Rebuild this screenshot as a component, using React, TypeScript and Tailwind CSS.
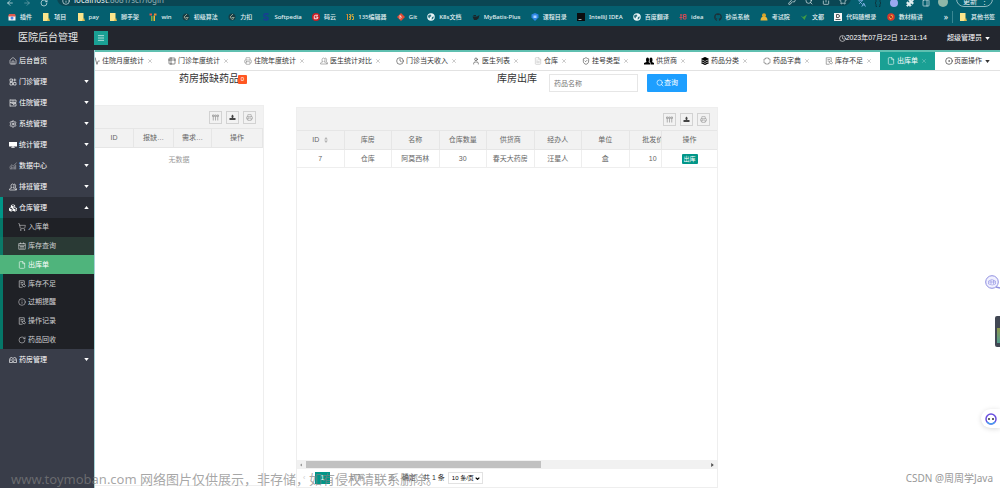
import type { ReactNode } from "react";
import {
  Activity,
  ArrowLeft,
  ArrowRight,
  ChartNoAxesCombined,
  CircleDot,
  Clock,
  File,
  FileText,
  House,
  Info,
  KeyRound,
  Languages,
  Menu,
  PanelRight,
  Puzzle,
  Printer,
  RotateCw,
  Search,
  Settings,
  Share,
  ShieldCheck,
  ShoppingCart,
  Star,
  Table2,
  User,
  X,
} from "lucide-react";
import { FaCubes, FaGithub, FaLayerGroup } from "react-icons/fa";

const icon = "size-2 shrink-0";
const thin = "size-2 shrink-0 stroke-[1.7]";

type Item = { label: string; icon: ReactNode };

function Caret({ up }: { up?: boolean }) {
  return (
    <svg viewBox="0 0 6 4" className="w-[5px] h-[3px] shrink-0" fill="currentColor">
      <path d={up ? "M0 4h6L3 0z" : "M0 0h6L3 4z"} />
    </svg>
  );
}

function Folder() {
  return (
    <svg viewBox="0 0 8 8" className={icon}>
      <path d="M1 0h5.500v6.500L8 8H1z" fill="#fbe58b" />
      <path d="M6 5.500h1.500V8H5z" fill="#e0bb4c" />
    </svg>
  );
}

function Shape({ children }: { children: ReactNode }) {
  return (
    <svg viewBox="0 0 16 16" className={icon}>
      {children}
    </svg>
  );
}

function Line({ d, className = "" }: { d: string; className?: string }) {
  return (
    <svg
      viewBox="0 0 16 16"
      className={`size-2 shrink-0 ${className}`}
      fill="none"
      stroke="currentColor"
      strokeWidth="1.300"
    >
      <path d={d} />
    </svg>
  );
}

const penPath = "M9 14.500H2.500v-13h10V8M5 5h5M5 8h3M8 9l1 3 4 2 2-3-3-3z";
const groupPath =
  "M6 9.500C3 8 3.500 2 7 2s4 6 1 7.500c5 1 5 2 5 4.500H1c0-3 1-4 5-4.500M10 2c4 0 4 5 2 6.500 2 1 3 2 3 5.500h-2";

const leetcode = (
  <Shape>
    <circle cx="8" cy="8" r="7" fill="#173c43" />
    <path d="M10 2L4 8l4 5 4-2M7 9h6" stroke="#aeb9a4" strokeWidth="1.600" fill="none" />
  </Shape>
);
const globe = (
  <Shape>
    <circle cx="8" cy="8" r="7.500" fill="#e8f4f6" />
    <path d="M3 4l4-1 2 3-3 2-1 3-3-3zM10 8l4-1-2 5-3 1z" fill="#2d7480" />
  </Shape>
);

const bookmarks: Item[] = [
  {
    label: "插件",
    icon: (
      <Shape>
        <path d="M1 6h14v9H1z" fill="#f1f3f4" />
        <path d="M2 2h12l2 5H0z" fill="#dd5b4e" />
        <circle cx="8" cy="10" r="3" fill="#4a86e8" />
      </Shape>
    ),
  },
  { label: "项目", icon: <Folder /> },
  { label: "pay", icon: <Folder /> },
  { label: "脚手架", icon: <Folder /> },
  {
    label: "win",
    icon: (
      <Shape>
        <path d="M1 1h5v4H1z" fill="#e2574c" />
        <path d="M4 6h3v10H4z" fill="#7db343" />
        <path d="M9 5h3v11H9z" fill="#f2b632" />
        <path d="M10 1h5v4h-5z" fill="#ed8733" />
      </Shape>
    ),
  },
  { label: "初级算法", icon: leetcode },
  { label: "力扣", icon: leetcode },
  {
    label: "Softpedia",
    icon: (
      <Shape>
        <path d="M13 3C9 0 3 2 4 6c1 3 8 1 8 5 0 3-5 4-9 1" stroke="#173f91" strokeWidth="3.500" fill="none" />
      </Shape>
    ),
  },
  {
    label: "码云",
    icon: (
      <Shape>
        <circle cx="8" cy="8" r="8" fill="#c71d23" />
        <path d="M12 4.500H7Q4.500 4.500 4.500 7v4.500H10q1.500 0 1.500-1.500V8H7.500" stroke="#fff" strokeWidth="1.800" fill="none" />
      </Shape>
    ),
  },
  {
    label: "135编辑器",
    icon: (
      <Shape>
        <path d="M3 2v12M1 3h2" stroke="#d88a34" strokeWidth="2" />
        <path d="M6 3h3v5H6h3v5H6M15 3h-3v4h3v6h-3" stroke="#c9a53f" strokeWidth="2" fill="none" />
      </Shape>
    ),
  },
  {
    label: "Git",
    icon: (
      <Shape>
        <path d="M8 0l8 8-8 8-8-8z" fill="#de4c36" />
        <path d="M6 4v8M6 6l4 3" stroke="#fff" strokeWidth="1.300" />
      </Shape>
    ),
  },
  { label: "K8s文档", icon: globe },
  {
    label: "MyBatis-Plus",
    icon: (
      <Shape>
        <path d="M1 7h9l5-3-2 7-4 3H4z" fill="#1b2529" />
        <path d="M3 5h5" stroke="#1b2529" strokeWidth="2" />
      </Shape>
    ),
  },
  {
    label: "课程目录",
    icon: (
      <Shape>
        <path d="M1 3l7-3 7 3v6l-7 7-7-7z" fill="#2f86e5" />
        <path d="M5 5h6v5H5z" fill="#a8d3ff" />
      </Shape>
    ),
  },
  {
    label: "IntelliJ IDEA",
    icon: (
      <Shape>
        <path d="M0 0h16v16H0z" fill="#0c0c0e" />
        <path d="M3 13h6" stroke="#fff" strokeWidth="1.300" />
      </Shape>
    ),
  },
  { label: "百度翻译", icon: globe },
  {
    label: "idea",
    icon: (
      <Shape>
        <path d="M2 4h5M4 2v12M1 9h6M9 3h5v9H9zM9 7h5" stroke="#c94a57" strokeWidth="2" fill="none" />
      </Shape>
    ),
  },
  { label: "秒杀系统", icon: <FaGithub className={`${icon} text-[#1d3038]`} /> },
  {
    label: "考试院",
    icon: (
      <Shape>
        <circle cx="8" cy="4.500" r="4" fill="#d8a52c" />
        <path d="M1 15q0-8 7-8t7 8z" fill="#e9b63a" />
      </Shape>
    ),
  },
  {
    label: "文都",
    icon: (
      <Shape>
        <path d="M1 5l5 3 8-5-5 11z" fill="#3f9b45" />
      </Shape>
    ),
  },
  {
    label: "代码随想录",
    icon: (
      <Shape>
        <path d="M0 0h16v16H0z" fill="#f6f6f6" />
        <path d="M5 3h3q3 0 3 3t-3 3H5zM3 13h10" stroke="#222" strokeWidth="1.500" fill="none" />
      </Shape>
    ),
  },
  {
    label: "教材精讲",
    icon: (
      <Shape>
        <circle cx="8" cy="8" r="7.500" fill="#d8382c" />
        <path d="M4 9l6-6 2 5-5 5z" fill="#f6b73c" />
        <circle cx="8" cy="8" r="2" fill="#7d1f22" />
      </Shape>
    ),
  },
];

const menuTop: Item[] = [
  { label: "门诊管理", icon: <Line d="M2 2h5v5H2zM2 9h5v5H2zM9 9h5v5H9zM11.500 1v6M8.500 4h6M4 4.500h1" /> },
  { label: "住院管理", icon: <Line d="M2 1v14M2 2h12v5H2M5 4h6M2 14h12V9H5M8 11h3" /> },
  { label: "系统管理", icon: <Settings className={icon} /> },
  {
    label: "统计管理",
    icon: (
      <Shape>
        <path d="M0 2h16v9H9v2h3v1H4v-1h3v-2H0z" fill="currentColor" />
      </Shape>
    ),
  },
  { label: "数据中心", icon: <ChartNoAxesCombined className={`${icon} opacity-60`} /> },
  { label: "排班管理", icon: <Line d={groupPath} /> },
];

const stockMenu: Item[] = [
  { label: "入库单", icon: <ShoppingCart className={thin} /> },
  { label: "库存查询", icon: <Line d="M1.500 3h13v11.500h-13zM1 6.500h14M5 1v3M11 1v3M4 9h8M4 12h8" /> },
  { label: "出库单", icon: <File className={thin} /> },
  { label: "库存不足", icon: <Line d={penPath} /> },
  { label: "过期提醒", icon: <Info className={thin} /> },
  { label: "操作记录", icon: <Line d={penPath} /> },
  { label: "药品回收", icon: <RotateCw className={thin} /> },
];

const tabs: Item[] = [
  { label: "住院月度统计", icon: <Activity className={thin} /> },
  { label: "门诊年度统计", icon: <Table2 className={thin} /> },
  { label: "住院年度统计", icon: <Printer className={`${thin} text-[#888]`} /> },
  { label: "医生统计对比", icon: <Line d={groupPath} className="text-[#888]" /> },
  { label: "门诊当天收入", icon: <Clock className={thin} /> },
  { label: "医生列表", icon: <User className={thin} /> },
  { label: "仓库", icon: <FileText className={`${thin} text-[#bbb]`} /> },
  { label: "挂号类型", icon: <ShieldCheck className={thin} /> },
  {
    label: "供货商",
    icon: (
      <svg viewBox="0 0 20 16" className="w-[10px] h-2 shrink-0" fill="#000">
        <path d="M4 5q0-4 3-4t3 4-1 5l3 2v3H0v-3l5-2Q4 8 4 5z" />
        <path d="M11 5q0-4 3-4t3 4-1 5l4 2v3h-7v-4l-2-1q1-2 0-5z" />
      </svg>
    ),
  },
  { label: "药品分类", icon: <FaLayerGroup className={`${icon} text-black`} /> },
  {
    label: "药品字典",
    icon: <Line d="M5 2h6v2h3v3l-1 1 1 1v3h-3v2H5v-2H2V9l1-1-1-1V4h3z" className="text-[#777]" />,
  },
  { label: "库存不足", icon: <Line d={penPath} className="text-[#777]" /> },
  { label: "出库单", icon: <File className={thin} /> },
];

function BrowserBar() {
  return (
    <div className="bg-[#045f6f] text-[#e4f0f2] font-['Noto_Sans','Noto_Sans_CJK_SC',sans-serif]">
      <div className="h-[7px] overflow-hidden flex items-end pl-[6px] pr-[7px]">
        <div className="w-[51px] shrink-0 flex items-end gap-[9px]">
          <ArrowLeft className={icon} />
          <ArrowRight className={`${icon} opacity-50`} />
          <RotateCw className={icon} />
        </div>
        <div className="flex-1 h-4 mb-px rounded-full bg-[#0a4653] flex items-end pl-[5px] pr-1 pb-px">
          <Info className={`${icon} mr-1`} />
          <span className="text-[8px] leading-[10px] flex-1">
            localhost<span className="opacity-60">:8081/scr/login</span>
          </span>
          <div className="flex items-end gap-[9px]">
            <KeyRound className={icon} />
            <Search className={icon} />
            <Share className={icon} />
            <Star className={icon} />
          </div>
        </div>
        <div className="flex items-end gap-2 pl-[7px]">
          <Languages className={`${icon} text-[#9cc3ff]`} />
          <Line d="M6 1H4v5L2 8l2 2v5h2M10 1h2v5l2 2-2 2v5h-2" className="text-[#10242a]" />
          <span className="size-2 rounded-full bg-[#9aa8f0]" />
          <Puzzle className={icon} fill="currentColor" />
          <PanelRight className={icon} />
          <span className="size-[10px] rounded-full bg-[#8fb7a8]" />
          <button className="h-4 rounded-full border border-[#8fb9c0] pl-[6px] pr-1 flex items-end gap-1 text-[7px] leading-[9px]">
            更新 <span>⋮</span>
          </button>
        </div>
      </div>
      <nav className="h-[19px] flex items-center pl-2 pr-[5px] text-[6px] leading-[10px] font-medium whitespace-nowrap">
        <div className="flex-1 flex justify-between">
          {bookmarks.map((b) => (
            <a key={b.label} href="#" className="flex items-center gap-1">
              {b.icon}
              {b.label}
            </a>
          ))}
        </div>
        <span className="ml-[21px] mr-[4px] text-[8px]">»</span>
        <span className="w-px h-3 bg-[#3a8793] mr-[6px]" />
        <a href="#" className="flex items-center gap-1">
          <Folder />
          其他书签
        </a>
      </nav>
    </div>
  );
}

function Header() {
  return (
    <header className="h-6 shrink-0 bg-[#23262e] text-white flex items-center">
      <h1 className="w-[94px] pl-[18px] text-[10px] leading-3 shrink-0 text-[#e6e6e6]">医院后台管理</h1>
      <button aria-label="收起菜单" className="size-[14px] bg-[#1aa094] flex items-center justify-center">
        <Menu className={icon} />
      </button>
      <div className="ml-auto flex items-center text-[7px] leading-3">
        <Clock className="size-[7px]" />
        <time>2023年07月22日 12:31:14</time>
        <button className="flex items-center gap-[3px] ml-5 mr-[10px]">
          超级管理员 <Caret />
        </button>
      </div>
    </header>
  );
}

function MenuRow({ item, up }: { item: Item; up?: boolean }) {
  return (
    <a href="#" className="h-[21px] flex items-center gap-[2px] pl-[9px] pr-[5px]">
      {item.icon}
      <span className="flex-1">{item.label}</span>
      <Caret up={up} />
    </a>
  );
}

function Sidebar() {
  return (
    <aside className="w-[94px] shrink-0 bg-[#393d49] text-white text-[7px] leading-3">
      <a href="#" className="h-[21px] flex items-center gap-[2px] pl-[9px]">
        <House className={thin} />
        后台首页
      </a>
      {menuTop.map((m) => (
        <MenuRow key={m.label} item={m} />
      ))}
      <div className="bg-[linear-gradient(to_right,#009688_3px,#2b2e37_3px)]">
        <MenuRow item={{ label: "仓库管理", icon: <FaCubes className={icon} /> }} up />
        <ul className="h-[131px] flex flex-col text-[#cfd0d2]">
          {stockMenu.map((m) => {
            const active = m.label === "出库单";
            const hover = m.label === "库存查询";
            return (
              <li
                key={m.label}
                className={`flex-1 flex ${
                  active
                    ? "bg-[#4fb47c] text-white"
                    : hover
                      ? "bg-[linear-gradient(to_right,#0b7a68_3px,#2a3a35_3px)]"
                      : "bg-[linear-gradient(to_right,#057768_3px,#1f2126_3px)]"
                }`}
              >
                <a href="#" className="flex-1 flex items-center gap-[2px] pl-[18px]">
                  {m.icon}
                  {m.label}
                </a>
              </li>
            );
          })}
        </ul>
      </div>
      <MenuRow
        item={{
          label: "药房管理",
          icon: <Line d="M1 13V8q0-5 4-5 2 0 3 2 1-2 3-2 4 0 4 5v5H9v-2H7v2zM8 5v6M4 6v4M12 6v4" />,
        }}
      />
    </aside>
  );
}

function TabBar() {
  return (
    <div className="h-[21px] shrink-0 border-t-2 border-t-[#5fbfb0] border-b border-b-[#e2e2e2] flex text-[7px] leading-3 text-[#333] whitespace-nowrap">
      <div className="flex-1 min-w-0 overflow-hidden flex justify-end">
        {tabs.map((t, i) => (
          <div
            key={i}
            className={`shrink-0 flex items-center pl-[7px] pr-2 ${
              t.label === "出库单" ? "bg-[#1aa094] text-white" : ""
            }`}
          >
            {t.icon}
            <a href="#" className="ml-[2px] mr-[3px]">
              {t.label}
            </a>
            <button aria-label={`关闭${t.label}`} className="opacity-50">
              <X className="size-[6px]" />
            </button>
          </div>
        ))}
      </div>
      <button className="w-[65px] flex items-center pl-[10px]">
        <CircleDot className={`${icon} mr-px`} />
        页面操作
        <span className="ml-[3px]">
          <Caret />
        </span>
      </button>
    </div>
  );
}

function Toolbar() {
  const btn = "size-[13px] border border-[#d2d2d2] flex items-center justify-center text-[#888]";
  return (
    <div className="h-[23px] flex items-center justify-end gap-1 pr-[7px] bg-[#f2f2f2] border-b border-[#e6e6e6]">
      <button aria-label="筛选列" className={btn}>
        <svg viewBox="0 0 14 14" className="size-[7px]" fill="none" stroke="currentColor" strokeWidth="1.300">
          <path d="M1 2h3v3H1zM5.500 2h3v3h-3zM10 2h3v3h-3zM2.500 6v7M7 6v7M11.500 6v7" />
        </svg>
      </button>
      <button aria-label="导出" className={btn}>
        <svg viewBox="0 0 14 14" className="size-[7px]" fill="#444">
          <path d="M7 1l3 4H8.500v3h-3V5H4zM1 8h12v4H1z" />
        </svg>
      </button>
      <button aria-label="打印" className={btn}>
        <Printer className="size-[7px] stroke-[1.7]" />
      </button>
    </div>
  );
}

const th = "h-[19px] p-0 font-normal text-center bg-[#f2f2f2] border-r border-b border-[#e6e6e6]";
const td = "h-[18px] p-0 text-center border-r border-b border-[#eee]";

function ShortagePanel() {
  return (
    <section className="flex flex-col min-w-0">
      <h2 className="h-[34px] shrink-0 flex items-start pl-[84px] text-[10px] leading-4 text-[#333] whitespace-nowrap">
        药房报缺药品
        <span className="mt-1 size-[9px] -ml-px rounded-[1px] bg-[#ff5722] text-white text-[6px] leading-[9px] text-center">
          0
        </span>
      </h2>
      <div className="flex-1 border border-l-0 border-[#eee]">
        <Toolbar />
        <table className="w-full table-fixed border-separate border-spacing-0">
          <thead>
            <tr>
              <th className={`${th} w-[39px]`}>ID</th>
              <th className={`${th} w-10`}>报缺…</th>
              <th className={`${th} w-[38px]`}>需求…</th>
              <th className={th}>操作</th>
            </tr>
          </thead>
        </table>
        <p className="pt-[6px] text-center text-[#999]">无数据</p>
      </div>
      <div className="h-[2px]" />
    </section>
  );
}

const columns = ["ID", "库房", "名称", "仓库数量", "供货商", "经办人", "单位", "批发价"];
const row = ["7", "仓库", "阿莫西林", "30", "春天大药房", "汪星人", "盒", "10"];

function StockOutPanel() {
  return (
    <section className="flex flex-col min-w-0">
      <form className="h-9 shrink-0 flex items-start pl-[201px]">
        <h2 className="text-[10px] leading-4 text-[#333] whitespace-nowrap">库房出库</h2>
        <input
          aria-label="药品名称"
          placeholder="药品名称"
          className="mt-[3px] ml-[12px] w-[89px] h-[18px] shrink-0 border border-[#e6e6e6] px-1 text-[7px] placeholder:text-[#777]"
        />
        <button
          type="button"
          className="mt-[3px] ml-[9px] w-10 h-[18px] shrink-0 rounded-[1px] bg-[#1e9fff] text-white flex items-center justify-center"
        >
          <Search className="size-2" />
          查询
        </button>
      </form>
      <div className="flex-1 min-h-0 flex flex-col border border-[#eee]">
        <Toolbar />
        <div className="flex-1 min-h-0 flex">
          <div className="flex-1 min-w-0 overflow-hidden">
            <table className="w-[380px] min-w-[104%] table-fixed border-separate border-spacing-0">
              <thead>
                <tr>
                  {columns.map((c) => (
                    <th key={c} className={th}>
                      {c === "ID" ? (
                        <span className="inline-flex items-center gap-[5px]">
                          ID
                          <svg viewBox="0 0 6 10" className="w-1 h-[6px]" fill="#b2b2b2">
                            <path d="M0 4h6L3 0zM0 6h6L3 10z" />
                          </svg>
                        </span>
                      ) : (
                        c
                      )}
                    </th>
                  ))}
                </tr>
              </thead>
              <tbody>
                <tr>
                  {row.map((c) => (
                    <td key={c} className={td}>
                      {c}
                    </td>
                  ))}
                </tr>
              </tbody>
            </table>
          </div>
          <div className="w-14 shrink-0">
            <table className="w-full border-separate border-spacing-0">
              <thead>
                <tr>
                  <th className={`${th} border-l border-r-0`}>操作</th>
                </tr>
              </thead>
              <tbody>
                <tr>
                  <td className={`${td} border-l border-r-0`}>
                    <button className="block mx-auto w-4 h-[10px] rounded-[1px] bg-[#009688] text-white text-[6px] leading-[10px]">
                      出库
                    </button>
                  </td>
                </tr>
              </tbody>
            </table>
          </div>
        </div>
        <div className="h-[9px] shrink-0 bg-[#f1f1f1] flex items-center px-[3px] text-[#505050]">
          <svg viewBox="0 0 4 6" className="w-[2px] h-1 mr-1" fill="#999">
            <path d="M4 0v6L0 3z" />
          </svg>
          <div className="flex-1 h-[7px]">
            <div className="w-[58%] h-full bg-[#c1c1c1]" />
          </div>
          <svg viewBox="0 0 4 6" className="w-[3px] h-1" fill="currentColor">
            <path d="M0 0v6l4-3z" />
          </svg>
        </div>
        <div className="h-[18px] shrink-0 flex items-center pl-[6px] text-[#333] whitespace-nowrap">
          <button aria-label="上一页" className="w-3 text-left text-[#ccc]">
            ‹
          </button>
          <button className="w-[15px] h-3 bg-[#009688] text-white">1</button>
          <button aria-label="下一页" className="w-5 text-[#ccc]">
            ›
          </button>
          <label className="flex items-center text-[#999]">
            到第
            <input aria-label="页码" defaultValue="1" className="w-4 h-3 mx-1 text-center text-[6px]" />
            页
          </label>
          <button className="ml-[7px] w-[14px]">确定</button>
          <span className="ml-[7px]">共 1 条</span>
          <span className="ml-[3px] relative">
            <select
              aria-label="每页条数"
              className="block appearance-none w-[35px] h-3 border border-[#e2e2e2] pl-[3px] text-[6px] leading-[10px] bg-white text-black"
            >
              <option>10 条/页</option>
            </select>
            <svg
              viewBox="0 0 8 5"
              className="absolute right-[3px] top-[5px] w-[5px] h-[3px] pointer-events-none"
              fill="none"
              stroke="#000"
              strokeWidth="2"
            >
              <path d="M1 1l3 3 3-3" />
            </svg>
          </span>
        </div>
      </div>
    </section>
  );
}

function FloatingWidgets() {
  return (
    <>
      <svg viewBox="0 0 15 15" className="absolute right-0 top-[275px] size-[15px]" fill="none" stroke="#8f8fe0">
        <circle cx="7" cy="7" r="6.300" fill="#f1f1ff" />
        <path d="M11 12l4 1" strokeWidth="1.500" />
        <path d="M3.500 6q3-3 7 0v3q-3 2-7 0zM4 7h6M6 5v4M8.500 5v4" strokeWidth=".6" />
      </svg>
      <div className="absolute right-0 top-[316px] w-[5px] h-[31px] rounded-l-[2px] bg-[#414753] flex items-end justify-end pb-1">
        <span className="w-[3px] h-[15px] bg-linear-to-b from-[#8d9a4b] to-[#4f9c8d]" />
      </div>
      <button
        aria-label="助手"
        className="absolute right-0 top-[409px] w-[19px] h-[19px] rounded-l-full bg-white shadow-[0_1px_5px_rgba(0,0,0,0.15)] flex items-center pl-1"
      >
        <svg viewBox="0 0 12 12" className="size-3" fill="none">
          <circle cx="6" cy="6" r="5" stroke="#6a4fe0" strokeWidth="1.500" />
          <path d="M2 9q4 4 8 0" stroke="#4a9cf0" strokeWidth="1.500" />
          <circle cx="4" cy="6" r="1" fill="#333" />
          <circle cx="8" cy="6" r="1" fill="#333" />
        </svg>
      </button>
    </>
  );
}

export default function App() {
  return (
    <div className="relative h-screen overflow-hidden flex flex-col bg-white font-['Liberation_Sans','Noto_Sans_CJK_SC',sans-serif]">
      <BrowserBar />
      <Header />
      <div className="flex-1 min-h-0 flex">
        <Sidebar />
        <main className="flex-1 min-w-0 flex flex-col border-l border-[#a5d3d8]">
          <TabBar />
          <div className="flex-1 min-h-0 grid grid-cols-[169fr_32fr_422fr_282fr] text-[7px] leading-3 text-[#666]">
            <ShortagePanel />
            <div />
            <StockOutPanel />
          </div>
        </main>
      </div>
      <FloatingWidgets />
      <p className="absolute left-[11px] bottom-0 text-[13px] leading-[18px] text-[#808080]/70 whitespace-nowrap pointer-events-none font-['Noto_Sans','Noto_Sans_CJK_SC',sans-serif]">
        www.toymoban.com 网络图片仅供展示，非存储，如有侵权请联系删除。
      </p>
      <p className="absolute right-[7px] bottom-[3px] text-[10px] leading-[14px] text-[#999] pointer-events-none font-['Noto_Sans','Noto_Sans_CJK_SC',sans-serif]">
        CSDN @周周学Java
      </p>
    </div>
  );
}
